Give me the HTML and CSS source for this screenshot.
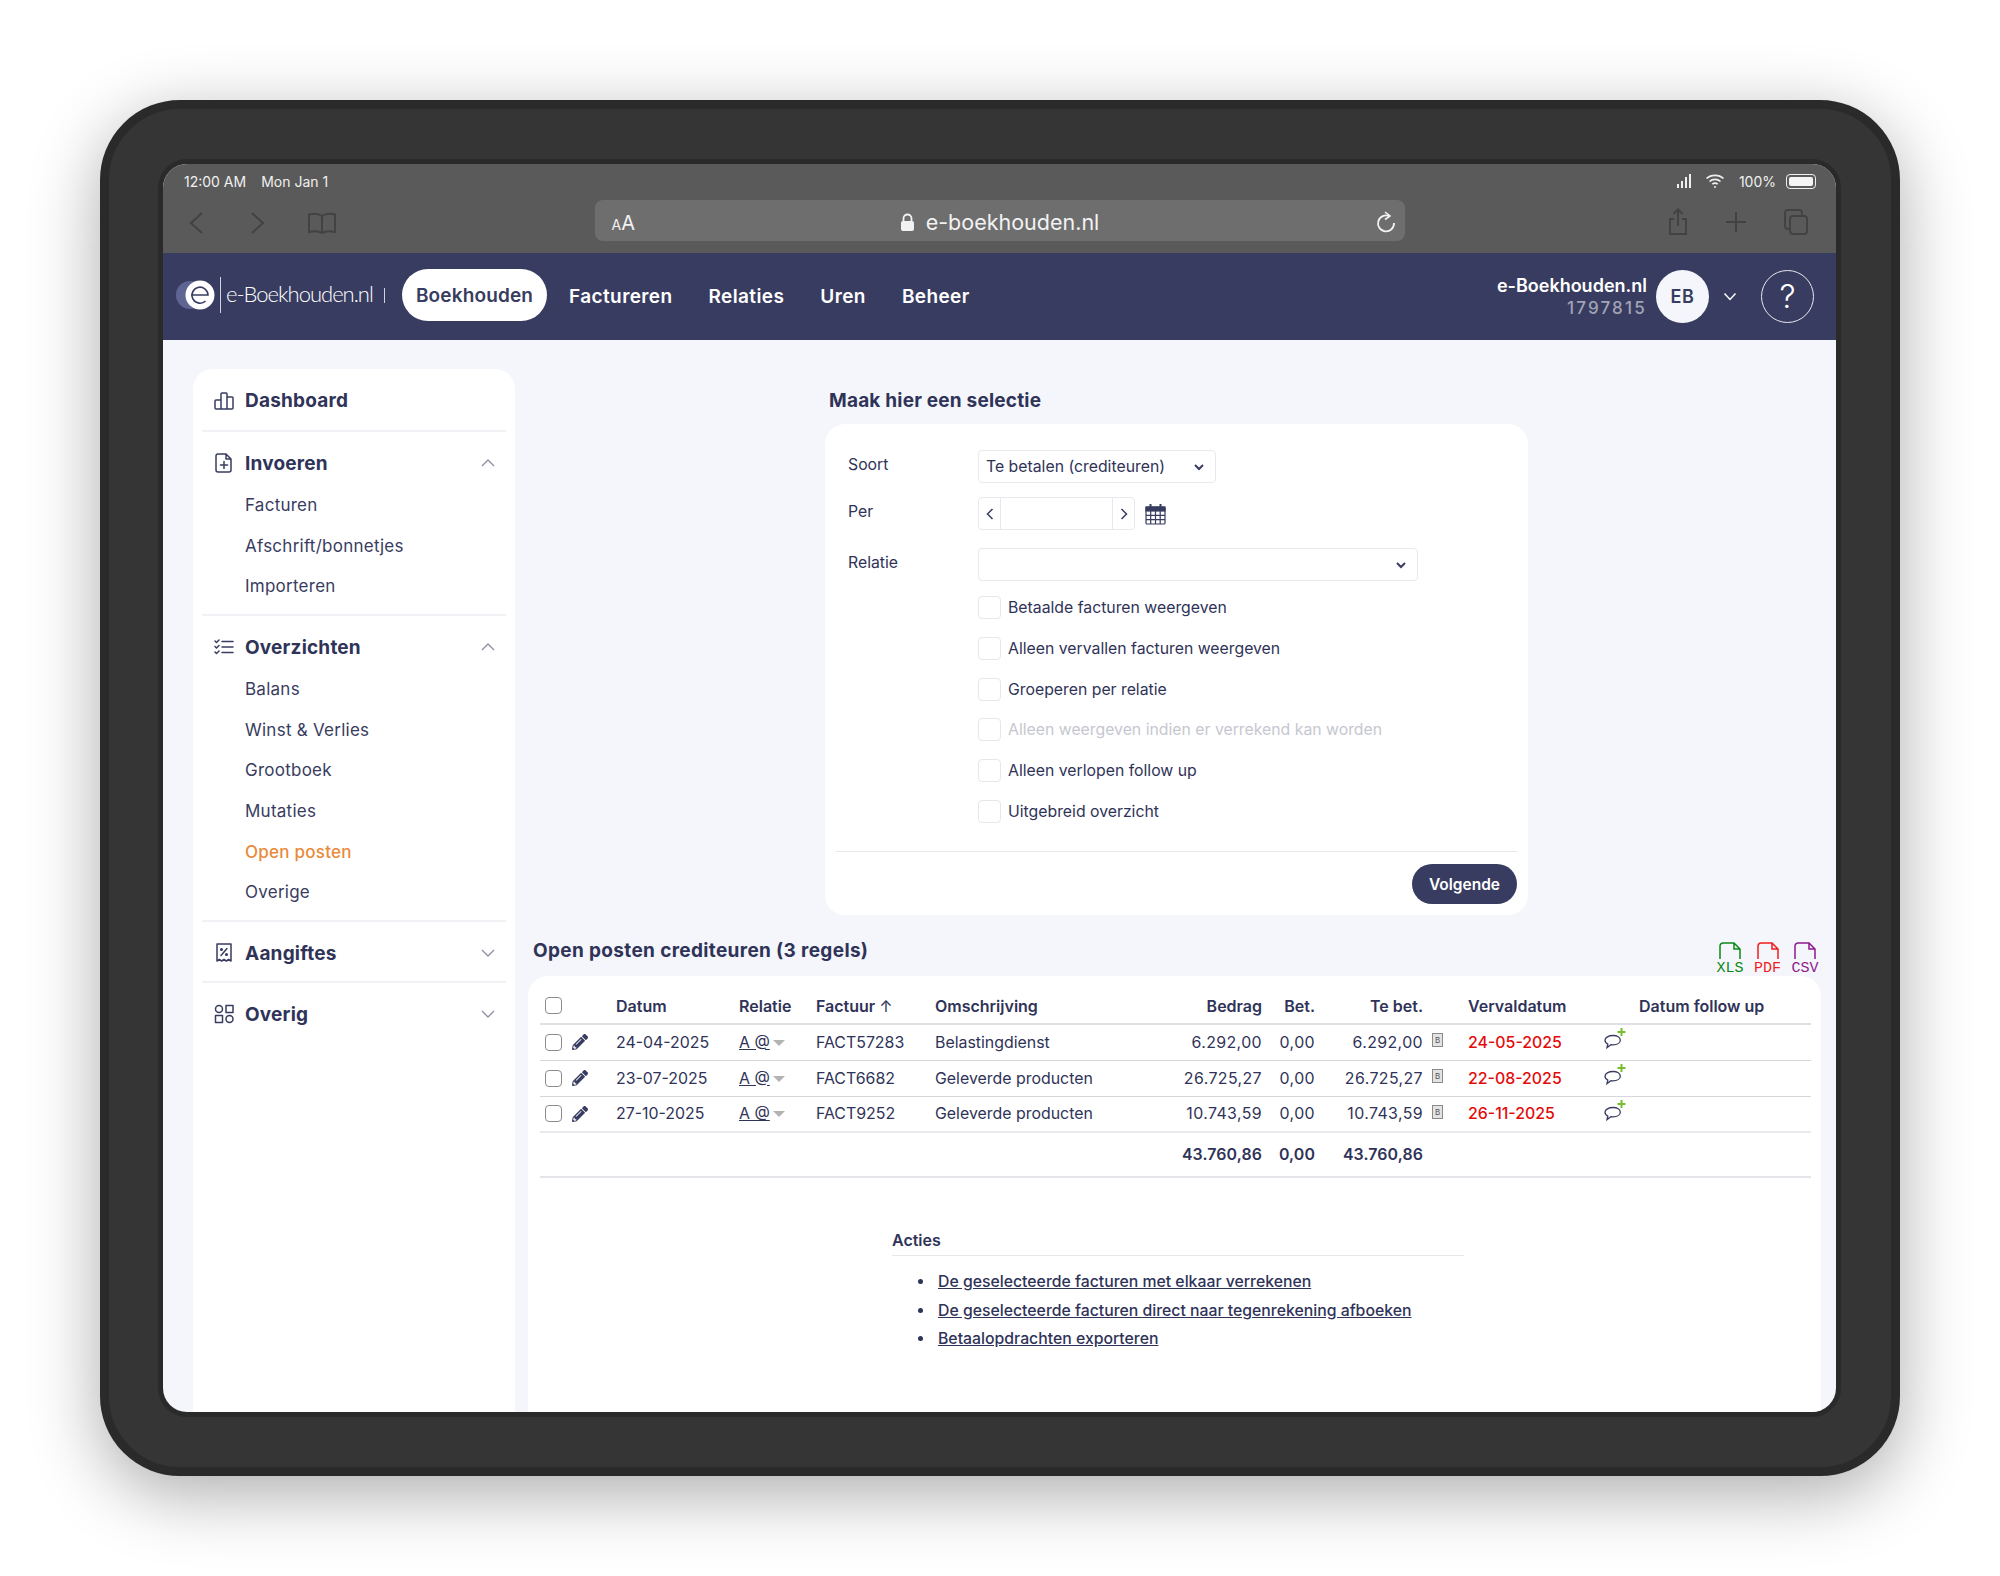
FILE: index.html
```html
<!DOCTYPE html>
<html lang="en">
<head>
    <meta charset="UTF-8">
    <meta name="viewport" content="width=device-width, initial-scale=1.0">
    <link rel="stylesheet" href="styles.css">
    <title>Open posten - e-Boekhouden.nl</title>
</head>
<body>
    <div class="device">
        <div class="screen">
            <!-- safari chrome -->
            <div class="chrome">
                <div class="statusbar">
                    <div class="status-left"><span>12:00 AM</span><span>Mon Jan 1</span></div>
                    <div class="status-right">
                        <svg width="17" height="16" viewBox="0 0 17 16" fill="#eee"><rect x="1" y="11" width="2" height="4"/><rect x="5" y="8" width="2" height="7"/><rect x="9" y="4" width="2" height="11"/><rect x="13" y="1" width="2" height="14"/></svg>
                        <svg width="20" height="16" viewBox="0 0 20 16" fill="none" stroke="#eee" stroke-width="1.7"><path d="M1.5 5.5C6 1.2 14 1.2 18.5 5.5"/><path d="M4.5 8.5c3-2.8 8-2.8 11 0"/><path d="M7.3 11.2c1.5-1.3 3.9-1.3 5.4 0"/><circle cx="10" cy="14" r="1" fill="#eee" stroke="none"/></svg>
                        <span class="status-pct">100%</span>
                        <div class="battery"><div class="battery-fill"></div></div>
                    </div>
                </div>
                <div class="browserbar">
                    <div class="browser-left">
                        <svg width="16" height="24" viewBox="0 0 16 24" class="dim"><path d="M14 2L3 12l11 10"/></svg>
                        <svg width="16" height="24" viewBox="0 0 16 24" class="dim"><path d="M2 2l11 10L2 22"/></svg>
                        <svg width="30" height="24" viewBox="0 0 30 24" class="dim book"><path d="M15 5C12 2.500 6 2.500 2 3.500V21c4-1 10-1 13 1 3-2 9-2 13-1V3.500C24 2.500 18 2.500 15 5zM15 5v17"/></svg>
                    </div>
                    <div class="urlbar">
                        <div class="url-aa"><span class="aa-small">A</span>A</div>
                        <div class="url-host">
                            <svg width="15" height="19" viewBox="0 0 15 19"><path d="M3.500 8V5.500a4 4 0 0 1 8 0V8" fill="none" stroke="#f2f2f2" stroke-width="1.800"/><rect x="1" y="8" width="13" height="10" rx="2" fill="#f2f2f2"/></svg>
                            <span>e-boekhouden.nl</span>
                        </div>
                        <div class="url-reload">
                            <svg width="20" height="22" viewBox="0 0 20 22" fill="none" stroke="#f2f2f2" stroke-width="1.800"><path d="M13.500 5.200A8 8 0 1 0 18 12"/><path d="M9 1l5 4-5 3.500" stroke-width="1.600"/></svg>
                        </div>
                    </div>
                    <div class="browser-right">
                        <svg width="22" height="28" viewBox="0 0 22 28" class="dim"><path d="M7 11H3v15h16V11h-4M11 18V2M6.500 6L11 1.500 15.500 6"/></svg>
                        <svg width="24" height="24" viewBox="0 0 24 24" class="dim"><path d="M12 2v20M2 12h20"/></svg>
                        <svg width="26" height="28" viewBox="0 0 26 28" class="dim"><rect x="7" y="8" width="17" height="18" rx="3"/><path d="M7 21H5a3 3 0 0 1-3-3V5a3 3 0 0 1 3-3h11a3 3 0 0 1 3 3v3"/></svg>
                    </div>
                </div>
            </div>

            <!-- app navigatie -->
            <div class="topnav">
                <div class="logo">
                    <svg class="logo-mark" width="40" height="30" viewBox="0 0 40 30"><circle cx="14" cy="15" r="14" fill="#5f6593"/><circle cx="24" cy="15" r="14.500" fill="#fff"/><path d="M15 15h17a8 8 0 1 0-2.500 6" fill="none" stroke="#383c60" stroke-width="1.600"/></svg>
                    <div class="logo-text">e-Boekhouden.nl</div>
                    <div class="logo-bar"></div>
                </div>
                <div class="nav-items">
                    <a class="nav-pill">Boekhouden</a>
                    <a class="nav-link">Factureren</a>
                    <a class="nav-link">Relaties</a>
                    <a class="nav-link">Uren</a>
                    <a class="nav-link">Beheer</a>
                </div>
                <div class="nav-user">
                    <div class="user-text">
                        <div class="user-name">e-Boekhouden.nl</div>
                        <div class="user-id">1797815</div>
                    </div>
                    <div class="avatar">EB</div>
                    <svg class="user-caret" width="14" height="9" viewBox="0 0 14 9" fill="none" stroke="#fff" stroke-width="1.500"><path d="M1.500 1.500L7 7.500l5.500-6"/></svg>
                    <div class="help">?</div>
                </div>
            </div>

            <div class="main">
                <!-- zijbalk -->
                <div class="sidebar">
                    <div class="side-group">
                        <div class="side-head">
                            <svg class="side-icon" width="20" height="18" viewBox="0 0 20 18"><path d="M2 8h5v9H2a1 1 0 0 1-1-1V9a1 1 0 0 1 1-1zM7 2a1 1 0 0 1 1-1h4a1 1 0 0 1 1 1v15H7zM13 5h5a1 1 0 0 1 1 1v10a1 1 0 0 1-1 1h-5z"/></svg>
                            <span>Dashboard</span>
                        </div>
                    </div>
                    <div class="side-group">
                        <div class="side-head">
                            <svg class="side-icon" width="20" height="20" viewBox="0 0 20 20"><path d="M4 1h8l5 5v11a2 2 0 0 1-2 2H4a2 2 0 0 1-2-2V3a2 2 0 0 1 2-2zM12 1v5h5M10 8.500v7M6.500 12h7"/></svg>
                            <span>Invoeren</span>
                            <svg class="side-caret" width="14" height="8" viewBox="0 0 14 8"><path d="M1 7l6-6 6 6"/></svg>
                        </div>
                        <a class="side-item">Facturen</a>
                        <a class="side-item">Afschrift/bonnetjes</a>
                        <a class="side-item">Importeren</a>
                    </div>
                    <div class="side-group">
                        <div class="side-head">
                            <svg class="side-icon" width="20" height="16" viewBox="0 0 20 16"><path d="M8 2.500h11M8 8h11M8 13.500h11M1 2l1.500 1.500L5 1M1 7.500L2.500 9 5 6.500M1 13l1.500 1.500L5 12"/></svg>
                            <span>Overzichten</span>
                            <svg class="side-caret" width="14" height="8" viewBox="0 0 14 8"><path d="M1 7l6-6 6 6"/></svg>
                        </div>
                        <a class="side-item">Balans</a>
                        <a class="side-item">Winst &amp; Verlies</a>
                        <a class="side-item">Grootboek</a>
                        <a class="side-item">Mutaties</a>
                        <a class="side-item side-active">Open posten</a>
                        <a class="side-item">Overige</a>
                    </div>
                    <div class="side-group">
                        <div class="side-head">
                            <svg class="side-icon" width="20" height="20" viewBox="0 0 20 20"><path d="M3 1h14v17l-2.300-1.500-2.400 1.500-2.300-1.500L7.700 18l-2.400-1.500L3 18zM13 5.500l-6 7"/><circle cx="7.500" cy="6.500" r=".8"/><circle cx="12.500" cy="11.500" r=".8"/></svg>
                            <span>Aangiftes</span>
                            <svg class="side-caret" width="14" height="8" viewBox="0 0 14 8"><path d="M1 1l6 6 6-6"/></svg>
                        </div>
                    </div>
                    <div class="side-group">
                        <div class="side-head">
                            <svg class="side-icon" width="20" height="20" viewBox="0 0 20 20"><circle cx="5" cy="5" r="3.500"/><rect x="12" y="1.500" width="7" height="7"/><rect x="1.500" y="11.500" width="7" height="7"/><circle cx="15.500" cy="15" r="3.500"/></svg>
                            <span>Overig</span>
                            <svg class="side-caret" width="14" height="8" viewBox="0 0 14 8"><path d="M1 1l6 6 6-6"/></svg>
                        </div>
                    </div>
                </div>

                <div class="content">
                    <!-- selectie formulier -->
                    <div class="selection">
                        <div class="section-title selection-title">Maak hier een selectie</div>
                        <div class="card form-card">
                            <div class="form-row form-row-select">
                                <label class="form-label">Soort</label>
                                <div class="select select-soort">
                                    <span>Te betalen (crediteuren)</span>
                                    <svg width="12" height="8" viewBox="0 0 12 8" class="select-caret"><path d="M2 2l4 4 4-4"/></svg>
                                </div>
                            </div>
                            <div class="form-row form-row-per">
                                <label class="form-label">Per</label>
                                <div class="date-field">
                                    <div class="date-btn"><svg width="8" height="12" viewBox="0 0 8 12"><path d="M6.500 1L1.500 6l5 5"/></svg></div>
                                    <div class="date-input"></div>
                                    <div class="date-btn"><svg width="8" height="12" viewBox="0 0 8 12"><path d="M1.500 1l5 5-5 5"/></svg></div>
                                </div>
                                <svg class="calendar" width="21" height="22" viewBox="0 0 21 22" fill="none" stroke="#383c60" stroke-width="1.200"><rect x="1" y="4" width="19" height="17" rx="1"/><rect x="1" y="4" width="19" height="4" fill="#383c60"/><path d="M1 12.300h19M1 16.600h19M5.700 8v13M10.500 8v13M15.200 8v13"/><path d="M5.500 1v5M15.500 1v5" stroke-width="2"/></svg>
                            </div>
                            <div class="form-row form-row-relatie">
                                <label class="form-label">Relatie</label>
                                <div class="select select-relatie">
                                    <span></span>
                                    <svg width="12" height="8" viewBox="0 0 12 8" class="select-caret"><path d="M2 2l4 4 4-4"/></svg>
                                </div>
                            </div>
                            <div class="check-list">
                                <label class="check-row"><input type="checkbox" class="check-box"><span>Betaalde facturen weergeven</span></label>
                                <label class="check-row"><input type="checkbox" class="check-box"><span>Alleen vervallen facturen weergeven</span></label>
                                <label class="check-row"><input type="checkbox" class="check-box"><span>Groeperen per relatie</span></label>
                                <label class="check-row check-disabled"><input type="checkbox" class="check-box"><span>Alleen weergeven indien er verrekend kan worden</span></label>
                                <label class="check-row"><input type="checkbox" class="check-box"><span>Alleen verlopen follow up</span></label>
                                <label class="check-row"><input type="checkbox" class="check-box"><span>Uitgebreid overzicht</span></label>
                            </div>
                            <div class="form-footer">
                                <button class="btn-primary">Volgende</button>
                            </div>
                        </div>
                    </div>

                    <!-- resultaten -->
                    <div class="results-head">
                        <div class="section-title">Open posten crediteuren (3 regels)</div>
                        <div class="exports">
                            <div class="export export-xls">
                                <svg width="24" height="17" viewBox="0 0 24 17"><path d="M2 17V4a3 3 0 0 1 3-3h11l6 6v10M16 1v6h6"/></svg>
                                <span>XLS</span>
                            </div>
                            <div class="export export-pdf">
                                <svg width="24" height="17" viewBox="0 0 24 17"><path d="M2 17V4a3 3 0 0 1 3-3h11l6 6v10M16 1v6h6"/></svg>
                                <span>PDF</span>
                            </div>
                            <div class="export export-csv">
                                <svg width="24" height="17" viewBox="0 0 24 17"><path d="M2 17V4a3 3 0 0 1 3-3h11l6 6v10M16 1v6h6"/></svg>
                                <span>CSV</span>
                            </div>
                        </div>
                    </div>
                    <div class="card table-card">
                        <table class="posten">
                            <colgroup>
                                <col class="c-check"><col class="c-edit"><col class="c-datum"><col class="c-relatie"><col class="c-factuur"><col class="c-omschr"><col class="c-bedrag"><col class="c-bet"><col class="c-tebet"><col class="c-bank"><col class="c-verval"><col class="c-chat"><col class="c-follow">
                            </colgroup>
                            <thead>
                                <tr>
                                    <th><input type="checkbox" class="row-check"></th>
                                    <th></th>
                                    <th>Datum</th>
                                    <th>Relatie</th>
                                    <th>Factuur <span class="sort-arrow">↑</span></th>
                                    <th>Omschrijving</th>
                                    <th class="num">Bedrag</th>
                                    <th class="num">Bet.</th>
                                    <th class="num">Te bet.</th>
                                    <th></th>
                                    <th>Vervaldatum</th>
                                    <th></th>
                                    <th>Datum follow up</th>
                                </tr>
                            </thead>
                            <tbody>
                                <tr>
                                    <td><input type="checkbox" class="row-check"></td>
                                    <td><svg class="pencil" width="16" height="16" viewBox="0 0 512 512"><path d="M497.900 142.100l-46.100 46.100c-4.700 4.700-12.300 4.700-17 0l-111-111c-4.700-4.700-4.700-12.300 0-17l46.100-46.100c18.700-18.700 49.100-18.700 67.900 0l60.100 60.100c18.800 18.700 18.800 49.100 0 67.900zM284.200 99.800L21.600 362.400.4 483.900c-2.900 16.400 11.400 30.600 27.800 27.800l121.500-21.300 262.600-262.600c4.700-4.700 4.700-12.300 0-17l-111-111c-4.800-4.700-12.400-4.700-17.100 0zM124.100 339.900c-5.500-5.500-5.500-14.300 0-19.800l154-154c5.500-5.500 14.300-5.500 19.800 0s5.500 14.300 0 19.800l-154 154c-5.500 5.500-14.300 5.500-19.800 0zM88 424h48v36.300l-64.500 11.300-31.100-31.100L51.700 376H88v48z"/></svg></td>
                                    <td>24-04-2025</td>
                                    <td><span class="rel-link">A @</span><span class="rel-caret"></span></td>
                                    <td>FACT57283</td>
                                    <td>Belastingdienst</td>
                                    <td class="num">6.292,00</td>
                                    <td class="num">0,00</td>
                                    <td class="num">6.292,00</td>
                                    <td><span class="bank-icon">B</span></td>
                                    <td class="overdue">24-05-2025</td>
                                    <td><svg class="chat" width="22" height="24" viewBox="0 0 22 24"><path class="chat-bubble" d="M9 8.500c4.200 0 7.300 2 7.300 4.700s-3.100 4.700-7.300 4.700c-.7 0-1.400 0-2.100-.2L3 20.600l.8-3.600C2 16.100 1 14.800 1 13.200 1 10.500 4.600 8.500 9 8.500z"/><path class="chat-plus" d="M17.500 1v8M13.500 5h8"/></svg></td>
                                    <td></td>
                                </tr>
                                <tr>
                                    <td><input type="checkbox" class="row-check"></td>
                                    <td><svg class="pencil" width="16" height="16" viewBox="0 0 512 512"><path d="M497.900 142.100l-46.100 46.100c-4.700 4.700-12.300 4.700-17 0l-111-111c-4.700-4.700-4.700-12.300 0-17l46.100-46.100c18.700-18.700 49.100-18.700 67.900 0l60.100 60.100c18.800 18.700 18.800 49.100 0 67.900zM284.200 99.800L21.600 362.400.4 483.900c-2.900 16.400 11.400 30.600 27.800 27.800l121.500-21.300 262.600-262.600c4.700-4.700 4.700-12.300 0-17l-111-111c-4.800-4.700-12.400-4.700-17.100 0zM124.100 339.900c-5.500-5.500-5.500-14.300 0-19.800l154-154c5.500-5.500 14.300-5.500 19.800 0s5.500 14.300 0 19.800l-154 154c-5.500 5.500-14.300 5.500-19.800 0zM88 424h48v36.300l-64.500 11.300-31.100-31.100L51.700 376H88v48z"/></svg></td>
                                    <td>23-07-2025</td>
                                    <td><span class="rel-link">A @</span><span class="rel-caret"></span></td>
                                    <td>FACT6682</td>
                                    <td>Geleverde producten</td>
                                    <td class="num">26.725,27</td>
                                    <td class="num">0,00</td>
                                    <td class="num">26.725,27</td>
                                    <td><span class="bank-icon">B</span></td>
                                    <td class="overdue">22-08-2025</td>
                                    <td><svg class="chat" width="22" height="24" viewBox="0 0 22 24"><path class="chat-bubble" d="M9 8.500c4.200 0 7.300 2 7.300 4.700s-3.100 4.700-7.300 4.700c-.7 0-1.400 0-2.100-.2L3 20.600l.8-3.600C2 16.100 1 14.800 1 13.200 1 10.500 4.600 8.500 9 8.500z"/><path class="chat-plus" d="M17.500 1v8M13.500 5h8"/></svg></td>
                                    <td></td>
                                </tr>
                                <tr>
                                    <td><input type="checkbox" class="row-check"></td>
                                    <td><svg class="pencil" width="16" height="16" viewBox="0 0 512 512"><path d="M497.900 142.100l-46.100 46.100c-4.700 4.700-12.300 4.700-17 0l-111-111c-4.700-4.700-4.700-12.300 0-17l46.100-46.100c18.700-18.700 49.100-18.700 67.900 0l60.100 60.100c18.800 18.700 18.800 49.100 0 67.900zM284.200 99.800L21.600 362.400.4 483.900c-2.900 16.400 11.400 30.600 27.800 27.800l121.500-21.300 262.600-262.600c4.700-4.700 4.700-12.300 0-17l-111-111c-4.800-4.700-12.400-4.700-17.100 0zM124.100 339.900c-5.500-5.500-5.500-14.300 0-19.800l154-154c5.500-5.500 14.300-5.500 19.800 0s5.500 14.300 0 19.800l-154 154c-5.500 5.500-14.300 5.500-19.800 0zM88 424h48v36.300l-64.500 11.300-31.100-31.100L51.700 376H88v48z"/></svg></td>
                                    <td>27-10-2025</td>
                                    <td><span class="rel-link">A @</span><span class="rel-caret"></span></td>
                                    <td>FACT9252</td>
                                    <td>Geleverde producten</td>
                                    <td class="num">10.743,59</td>
                                    <td class="num">0,00</td>
                                    <td class="num">10.743,59</td>
                                    <td><span class="bank-icon">B</span></td>
                                    <td class="overdue">26-11-2025</td>
                                    <td><svg class="chat" width="22" height="24" viewBox="0 0 22 24"><path class="chat-bubble" d="M9 8.500c4.200 0 7.300 2 7.300 4.700s-3.100 4.700-7.300 4.700c-.7 0-1.400 0-2.100-.2L3 20.600l.8-3.600C2 16.100 1 14.800 1 13.200 1 10.500 4.600 8.500 9 8.500z"/><path class="chat-plus" d="M17.500 1v8M13.500 5h8"/></svg></td>
                                    <td></td>
                                </tr>
                            </tbody>
                            <tfoot>
                                <tr>
                                    <td colspan="6"></td>
                                    <td class="num">43.760,86</td>
                                    <td class="num">0,00</td>
                                    <td class="num">43.760,86</td>
                                    <td colspan="4"></td>
                                </tr>
                            </tfoot>
                        </table>
                        <div class="acties">
                            <div class="acties-title">Acties</div>
                            <ul class="acties-list">
                                <li><a>De geselecteerde facturen met elkaar verrekenen</a></li>
                                <li><a>De geselecteerde facturen direct naar tegenrekening afboeken</a></li>
                                <li><a>Betaalopdrachten exporteren</a></li>
                            </ul>
                        </div>
                    </div>
                </div>
            </div>
        </div>
    </div>
</body>
</html>
```

FILE: styles.css
```css
* {
    box-sizing: border-box;
}

body {
    margin: 0;
    height: 1576px;
    overflow: hidden;
    background-color: #ffffff;
    font-family: "Inter", "Liberation Sans", sans-serif;
    color: #2f3358;
}

a {
    color: inherit;
}

/* tablet frame */
.device {
    width: 1800px;
    height: 1376px;
    margin: 100px 0 0 100px;
    padding: 55px 55px 55px 54px;
    background-color: #353535;
    border: 9px solid #2a2a2a;
    border-radius: 80px;
    box-shadow: 0 18px 70px rgba(0, 0, 0, 0.33);
}

.screen {
    display: flex;
    flex-direction: column;
    height: 100%;
    background-color: #f4f6fb;
    border-radius: 24px;
    overflow: hidden;
    box-shadow: 0 0 0 5px #2a2a2a;
}

/* safari bars */
.chrome {
    height: 89px;
    flex: none;
    background-color: #5a5a5a;
}

.statusbar {
    display: flex;
    justify-content: space-between;
    align-items: center;
    height: 36px;
    padding: 0 20px 2px 21px;
    font-size: 14px;
    color: #f0f0f0;
}

.status-left {
    display: flex;
    gap: 15px;
}

.status-right {
    display: flex;
    align-items: center;
    gap: 12px;
}

.status-pct {
    margin-left: 2px;
}

.battery {
    width: 30px;
    height: 15px;
    margin-left: -2px;
    padding: 2px;
    border: 1px solid #eee;
    border-radius: 4px;
}

.battery-fill {
    height: 100%;
    background-color: #f4f4f4;
    border-radius: 2px;
}

.browserbar {
    display: grid;
    grid-template-columns: 1fr 810px 1fr;
    height: 41px;
}

.dim {
    fill: none;
    stroke: #424242;
    stroke-width: 2;
}

.browser-left {
    display: flex;
    align-items: center;
    padding: 4px 0 0 25px;
}

.browser-left svg + svg {
    margin-left: 46px;
}

.browser-left .book {
    margin-left: 41px;
}

.browser-right {
    display: flex;
    align-items: center;
    justify-content: flex-end;
    gap: 35px;
    padding: 3px 27px 0 0;
}

.urlbar {
    display: grid;
    grid-template-columns: 1fr auto 1fr;
    align-items: center;
    padding: 0 9px;
    background-color: #6e6e6e;
    border-radius: 8px;
    color: #f2f2f2;
}

.url-aa {
    padding: 4px 0 0 8px;
    font-size: 20px;
}

.aa-small {
    font-size: 14px;
}

.url-host {
    display: flex;
    align-items: center;
    gap: 11px;
    padding-top: 3px;
    font-size: 21.5px;
}

.url-reload {
    display: flex;
    justify-content: flex-end;
    padding-top: 2px;
}

/* app nav */
.topnav {
    display: flex;
    align-items: center;
    height: 87px;
    flex: none;
    background-color: #383c60;
    color: #ffffff;
}

.logo {
    display: flex;
    align-items: center;
    width: 239px;
    height: 100%;
    padding: 0 0 3px 13px;
}

.logo-mark {
    margin-right: 4px;
}

.logo-text {
    height: 36px;
    padding-left: 5px;
    border-left: 1px solid #cfd1de;
    font-family: "Lato", sans-serif;
    font-size: 22px;
    font-weight: 300;
    letter-spacing: -1px;
    line-height: 34px;
    white-space: nowrap;
}

.logo-bar {
    width: 1px;
    height: 15px;
    margin-left: 11px;
    background-color: #cfd1de;
}

.nav-items {
    display: flex;
    align-items: center;
    font-size: 19px;
    font-weight: 600;
    letter-spacing: 0.4px;
}

.nav-pill {
    display: flex;
    align-items: center;
    justify-content: center;
    width: 145px;
    height: 52px;
    margin-bottom: 3px;
    background-color: #ffffff;
    border-radius: 26px;
    color: #383c60;
    letter-spacing: 0.15px;
}

.nav-link {
    margin-left: 36px;
}

.nav-pill + .nav-link {
    margin-left: 22px;
}

.nav-user {
    display: flex;
    align-items: center;
    margin-left: auto;
    padding-right: 22px;
}

.user-text {
    margin-right: 9px;
    text-align: right;
    font-weight: 600;
}

.user-name {
    font-size: 18px;
    line-height: 22px;
}

.user-id {
    font-size: 17px;
    font-weight: 500;
    letter-spacing: 2.2px;
    line-height: 22px;
    color: #a2a4b6;
}

.avatar {
    display: flex;
    align-items: center;
    justify-content: center;
    width: 53px;
    height: 53px;
    background-color: #f4f6fb;
    border-radius: 50%;
    color: #383c60;
    font-size: 18px;
    font-weight: 600;
    letter-spacing: 0.5px;
}

.user-caret {
    margin: 0 24px 0 14px;
}

.help {
    display: flex;
    align-items: center;
    justify-content: center;
    width: 53px;
    height: 53px;
    border: 1.5px solid #e8e9ef;
    border-radius: 50%;
    font-size: 32px;
    font-weight: 300;
}

/* page */
.main {
    display: flex;
    flex: 1;
    min-height: 0;
    padding: 29px 15px 0 30px;
}

.sidebar {
    width: 322px;
    flex: none;
    padding: 0 9px;
    background-color: #ffffff;
    border-radius: 20px 20px 0 0;
}

.side-group {
    padding: 11px 0 7px;
    border-bottom: 2px solid #f1f2f5;
}

.side-group:first-child {
    padding-bottom: 8.5px;
}

.side-group:last-child {
    border-bottom: none;
}

.side-head {
    display: flex;
    align-items: center;
    height: 41px;
    padding: 0 11px 0 12px;
    font-size: 19px;
    font-weight: 700;
    letter-spacing: 0.2px;
    color: #2f3358;
}

.side-head + .side-item {
    margin-top: 1px;
}

.side-icon {
    margin-right: 11px;
    fill: none;
    stroke: #383c60;
    stroke-width: 1.500;
    stroke-linecap: round;
    stroke-linejoin: round;
}

.side-caret {
    margin-left: auto;
    fill: none;
    stroke: #8f91a3;
    stroke-width: 1.300;
}

.side-item {
    display: flex;
    align-items: center;
    height: 40.7px;
    padding-left: 43px;
    font-size: 17px;
    letter-spacing: 0.25px;
    color: #383c60;
}

.side-active {
    color: #e88b3c;
    font-weight: 500;
}

.content {
    flex: 1;
    min-width: 0;
    margin-left: 13px;
}

.section-title {
    font-size: 19px;
    font-weight: 700;
    letter-spacing: 0.35px;
    color: #2f3358;
}

.card {
    background-color: #ffffff;
    border-radius: 20px;
}

/* selection form */
.selection {
    width: 703px;
    margin-left: 297px;
}

.selection-title {
    height: 55px;
    padding: 19px 0 0 4px;
    letter-spacing: 0.2px;
    line-height: 26px;
}

.form-card {
    height: 491px;
    padding: 26px 11px 0;
}

.form-row {
    display: flex;
    align-items: center;
    height: 33px;
    margin-bottom: 14px;
}

.form-row-per {
    margin-bottom: 18px;
}

.form-row-relatie {
    margin-bottom: 6.5px;
}

.form-label {
    width: 142px;
    padding: 0 0 4px 12px;
    font-size: 15.8px;
}

.select {
    display: flex;
    align-items: center;
    justify-content: space-between;
    height: 33px;
    padding: 0 10px 0 7px;
    border: 1px solid #e8e9ee;
    border-radius: 4px;
    font-size: 15.8px;
}

.select-soort {
    width: 238px;
}

.select-relatie {
    width: 440px;
}

.select-caret {
    fill: none;
    stroke: #383c60;
    stroke-width: 2;
}

.date-field {
    display: flex;
    width: 157px;
    height: 33px;
    border: 1px solid #e8e9ee;
    border-radius: 4px;
}

.date-btn {
    display: flex;
    align-items: center;
    justify-content: center;
    width: 21px;
    fill: none;
    stroke: #383c60;
    stroke-width: 1.500;
}

.date-input {
    flex: 1;
    border-left: 1px solid #e8e9ee;
    border-right: 1px solid #e8e9ee;
}

.calendar {
    margin-left: 10px;
}

.check-row {
    display: flex;
    align-items: center;
    height: 40.7px;
    padding-left: 142px;
    font-size: 15.8px;
}

.check-box {
    width: 23px;
    height: 23px;
    margin: 0 7px 0 0;
    appearance: none;
    background-color: #ffffff;
    border: 1px solid #e6e7ec;
    border-radius: 4px;
}

.check-disabled {
    color: #c6c7d0;
}

.form-footer {
    display: flex;
    justify-content: flex-end;
    height: 54px;
    margin-top: 19px;
    padding-top: 12.5px;
    border-top: 1px solid #e7e8ec;
}

.btn-primary {
    width: 105px;
    height: 40px;
    padding: 0;
    background-color: #383c60;
    border: none;
    border-radius: 20px;
    color: #ffffff;
    font-family: inherit;
    font-size: 15.5px;
    font-weight: 600;
}

/* results */
.results-head {
    display: flex;
    justify-content: space-between;
    height: 61px;
    padding: 24px 0 0 5px;
}

.exports {
    display: flex;
    gap: 7.5px;
    margin-top: 3px;
    padding-right: 1px;
}

.export {
    display: flex;
    flex-direction: column;
    align-items: center;
    width: 30px;
    fill: none;
    stroke-width: 1.500;
    font-family: "Liberation Mono", monospace;
    font-size: 15px;
    line-height: 15px;
}

.export span {
    margin-top: 2px;
}

.export-xls {
    color: #0a8a18;
    stroke: #0a8a18;
}

.export-pdf {
    color: #f01c1c;
    stroke: #f01c1c;
}

.export-csv {
    color: #8c1a8c;
    stroke: #8c1a8c;
}

.table-card {
    height: 436px;
    padding: 14px 10px 0 12px;
    border-radius: 20px 20px 0 0;
}

.posten {
    width: 1271px;
    table-layout: fixed;
    border-collapse: collapse;
    font-size: 15.9px;
}

.c-check { width: 25px; }
.c-edit { width: 51px; }
.c-datum { width: 123px; }
.c-relatie { width: 77px; }
.c-factuur { width: 119px; }
.c-omschr { width: 195px; }
.c-bedrag { width: 132px; }
.c-bet { width: 53px; }
.c-tebet { width: 108px; }
.c-bank { width: 45px; }
.c-verval { width: 136px; }
.c-chat { width: 35px; }
.c-follow { width: 172px; }

.posten th {
    height: 34px;
    padding: 0 0 2px;
    border-bottom: 2px solid #dedfe3;
    font-size: 16px;
    font-weight: 600;
    text-align: left;
    white-space: nowrap;
}

.posten td {
    height: 36px;
    padding: 0;
    border-bottom: 1.5px solid #d6d7db;
    white-space: nowrap;
}

.posten tbody tr:last-child td {
    border-bottom: 2px solid #e9eaee;
}

.posten tfoot td {
    height: 45px;
    border-bottom: 2px solid #e4e5e9;
    font-weight: 600;
}

.posten td.num {
    letter-spacing: 0.4px;
    text-align: right;
}

.posten tfoot td.num {
    letter-spacing: 0.1px;
}

.posten th.num {
    text-align: right;
}

.row-check {
    display: block;
    width: 17px;
    height: 17px;
    margin: 0 0 0 5px;
    appearance: none;
    background-color: #ffffff;
    border: 1.5px solid #8c8c8c;
    border-radius: 4px;
}

.pencil {
    display: block;
    margin-left: 7px;
    fill: #383c60;
}

.sort-arrow {
    font-weight: 400;
}

.rel-link {
    text-decoration: underline;
}

.rel-caret {
    display: inline-block;
    margin-left: 3px;
    vertical-align: 2px;
    border-top: 6px solid #b3b3b3;
    border-left: 6.5px solid transparent;
    border-right: 6.5px solid transparent;
}

.bank-icon {
    display: block;
    width: 11px;
    height: 14px;
    margin: 0 0 4px 9px;
    background-color: #e3e3e3;
    border: 1px solid #8a8a8a;
    color: #555;
    font-size: 8px;
    line-height: 12px;
    text-align: center;
}

.overdue {
    color: #e40b0b;
    font-weight: 500;
}

.chat {
    display: block;
    margin-bottom: 6px;
}

.chat-bubble {
    fill: none;
    stroke: #383c60;
    stroke-width: 1.300;
}

.chat-plus {
    fill: none;
    stroke: #79bd2f;
    stroke-width: 2;
}

/* acties */
.acties {
    width: 572px;
    margin: 50px 0 0 352px;
}

.acties-title {
    height: 28px;
    border-bottom: 1px solid #e7e8ec;
    font-size: 16px;
    font-weight: 600;
    line-height: 24px;
}

.acties-list {
    margin: 12px 0 0;
    padding: 0 0 0 43px;
    font-size: 15.8px;
    font-weight: 500;
}

.acties-list li {
    height: 28.500px;
    padding-left: 3px;
    line-height: 28px;
}

.acties-list a {
    text-decoration: underline;
}
```
